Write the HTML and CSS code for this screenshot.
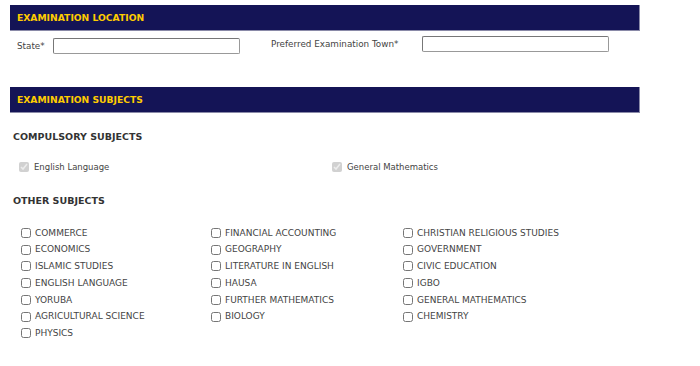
FILE: index.html
```html
<!DOCTYPE html>
<html lang="en">
<head>
    <meta charset="UTF-8">
    <meta name="viewport" content="width=device-width, initial-scale=1.0">
    <title>Examination Registration</title>
    <link rel="stylesheet" href="styles.css">
</head>
<body>
    <div class="form-wrap">
        <div class="section-head">EXAMINATION LOCATION</div>
        <div class="location-row">
            <div class="field field-state">
                <label for="state">State*</label>
                <input type="text" id="state" class="text-input">
            </div>
            <div class="field field-town">
                <label for="town">Preferred Examination Town*</label>
                <input type="text" id="town" class="text-input">
            </div>
        </div>

        <div class="section-head head-subjects">EXAMINATION SUBJECTS</div>

        <div class="subjects">
            <h4 class="sub-title">COMPULSORY SUBJECTS</h4>
            <div class="compulsory">
                <label class="check check-wide"><input type="checkbox" checked disabled> English Language</label>
                <label class="check"><input type="checkbox" checked disabled> General Mathematics</label>
            </div>

            <h4 class="sub-title title-other">OTHER SUBJECTS</h4>
            <div class="others">
                <label class="check caps"><input type="checkbox"> COMMERCE</label>
                <label class="check caps"><input type="checkbox"> FINANCIAL ACCOUNTING</label>
                <label class="check caps"><input type="checkbox"> CHRISTIAN RELIGIOUS STUDIES</label>
                <label class="check caps"><input type="checkbox"> ECONOMICS</label>
                <label class="check caps"><input type="checkbox"> GEOGRAPHY</label>
                <label class="check caps"><input type="checkbox"> GOVERNMENT</label>
                <label class="check caps"><input type="checkbox"> ISLAMIC STUDIES</label>
                <label class="check caps"><input type="checkbox"> LITERATURE IN ENGLISH</label>
                <label class="check caps"><input type="checkbox"> CIVIC EDUCATION</label>
                <label class="check caps"><input type="checkbox"> ENGLISH LANGUAGE</label>
                <label class="check caps"><input type="checkbox"> HAUSA</label>
                <label class="check caps"><input type="checkbox"> IGBO</label>
                <label class="check caps"><input type="checkbox"> YORUBA</label>
                <label class="check caps"><input type="checkbox"> FURTHER MATHEMATICS</label>
                <label class="check caps"><input type="checkbox"> GENERAL MATHEMATICS</label>
                <label class="check caps"><input type="checkbox"> AGRICULTURAL SCIENCE</label>
                <label class="check caps"><input type="checkbox"> BIOLOGY</label>
                <label class="check caps"><input type="checkbox"> CHEMISTRY</label>
                <label class="check caps"><input type="checkbox"> PHYSICS</label>
            </div>
        </div>
    </div>
</body>
</html>
```

FILE: styles.css
```css
*{
    margin: 0px;
    padding: 0px;
    box-sizing: border-box;
}

body{
    background: #fff;
    font-family: "DejaVu Sans", Verdana, sans-serif;
    font-size: 8.5px;
    color: #444;
}

.form-wrap{
    width: 640px;
    padding: 5px 0 0 10px;
}

.section-head{
    height: 26px;
    background-color: #141456;
    border-right: 1px solid #8a8aa8;
    border-bottom: 1px solid #8a8aa8;
    color: #ffcc00;
    font-size: 9.2px;
    font-weight: bold;
    line-height: 25px;
    padding-left: 7px;
}

.location-row{
    display: flex;
    padding: 7px 0 0 7px;
    height: 56px;
}

.field{
    display: flex;
    align-items: flex-start;
}

.field label{
    font-size: 8.8px;
    line-height: 15px;
    margin-top: 1px;
}

.field-state{
    width: 254px;
}
.field-state label{
    width: 36px;
}

.field-town{
    margin-top: -2px;
}
.field-town label{
    width: 151px;
}

.text-input{
    width: 187px;
    height: 16px;
    border: 1px solid #999;
    border-top-color: #777;
    border-left-color: #777;
    border-radius: 2px;
    outline: none;
}

.subjects{
    padding: 18px 0 0 3px;
}

.sub-title{
    font-size: 9.5px;
    font-weight: bold;
    color: #333;
    line-height: 12px;
}

.compulsory{
    display: flex;
    padding: 16px 0 0 6px;
}

.check{
    display: flex;
    align-items: center;
    line-height: 16.7px;
    white-space: nowrap;
}

.check input{
    width: 10px;
    height: 10px;
    margin: 0 5px 0 0;
}

.check-wide{
    width: 313px;
}

.title-other{
    margin-top: 19px;
}

.others{
    display: grid;
    grid-template-columns: 190px 192px 200px;
    padding: 18px 0 0 8px;
}

.caps{
    font-size: 9px;
}
.caps input{
    margin-right: 4px;
}
```
